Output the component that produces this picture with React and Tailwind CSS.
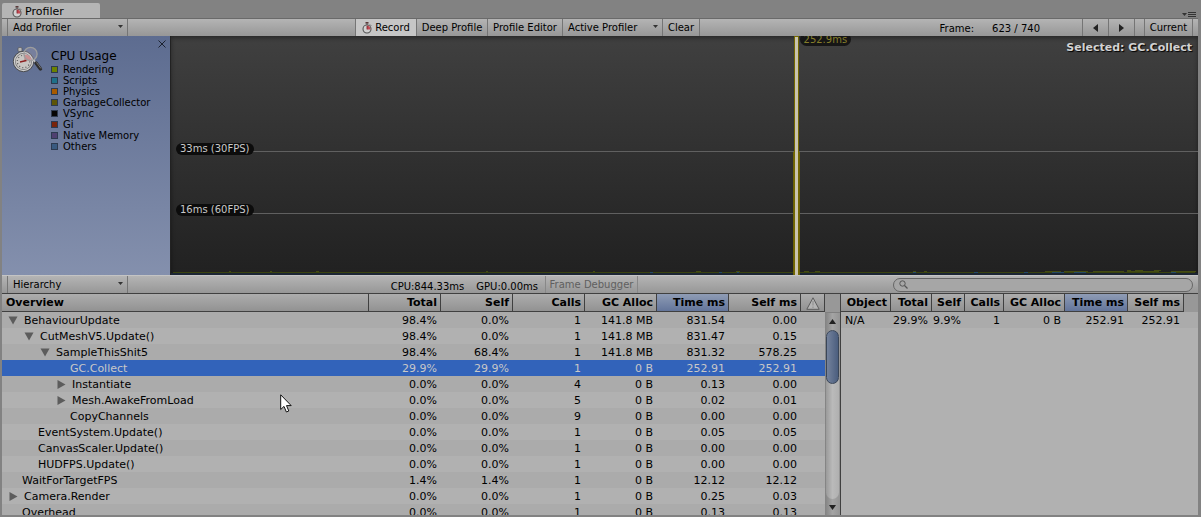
import React from "react";

const legend = [
  ["Rendering", "bg-[#6b8200]"],
  ["Scripts", "bg-[#1f7089]"],
  ["Physics", "bg-[#a85a00]"],
  ["GarbageCollector", "bg-[#5d5506]"],
  ["VSync", "bg-[#050505]"],
  ["Gi", "bg-[#78240c]"],
  ["Native Memory", "bg-[#4f4070]"],
  ["Others", "bg-[#395a80]"],
];

const rows = [
  ["BehaviourUpdate", 0, "open", "98.4%", "0.0%", "1", "141.8 MB", "831.54", "0.00"],
  ["CutMeshV5.Update()", 1, "open", "98.4%", "0.0%", "1", "141.8 MB", "831.47", "0.15"],
  ["SampleThisShit5", 2, "open", "98.4%", "68.4%", "1", "141.8 MB", "831.32", "578.25"],
  ["GC.Collect", 3, "", "29.9%", "29.9%", "1", "0 B", "252.91", "252.91"],
  ["Instantiate", 3, "closed", "0.0%", "0.0%", "4", "0 B", "0.13", "0.00"],
  ["Mesh.AwakeFromLoad", 3, "closed", "0.0%", "0.0%", "5", "0 B", "0.02", "0.01"],
  ["CopyChannels", 3, "", "0.0%", "0.0%", "9", "0 B", "0.00", "0.00"],
  ["EventSystem.Update()", 1, "", "0.0%", "0.0%", "1", "0 B", "0.05", "0.05"],
  ["CanvasScaler.Update()", 1, "", "0.0%", "0.0%", "1", "0 B", "0.00", "0.00"],
  ["HUDFPS.Update()", 1, "", "0.0%", "0.0%", "1", "0 B", "0.00", "0.00"],
  ["WaitForTargetFPS", 0, "", "1.4%", "1.4%", "1", "0 B", "12.12", "12.12"],
  ["Camera.Render", 0, "closed", "0.0%", "0.0%", "1", "0 B", "0.25", "0.03"],
  ["Overhead", 0, "", "0.0%", "0.0%", "1", "0 B", "0.13", "0.13"],
];

const indents = ["pl-[6px]", "pl-[22px]", "pl-[38px]", "pl-[54px]"];
const BAR = "flex h-[18px] shrink-0 items-stretch bg-gradient-to-b from-[#b4b4b4] to-[#979797] text-[10px] leading-[18px]";
const TH = "h-[18px] overflow-hidden whitespace-nowrap border-r border-b border-[#404040] p-0 pt-px pr-[3px] text-right font-bold";
const TH_BG = "bg-gradient-to-b from-[#adadad] to-[#929292]";
const TH_SEL = "bg-gradient-to-b from-[#8f9cb5] to-[#63759a]";
const TABLE = "w-full table-fixed border-separate border-spacing-0 text-[11px] leading-[14px]";

function Stopwatch() {
  return (
    <svg width="10" height="12" viewBox="0 0 10 12" aria-hidden="true">
      <rect x="3.5" y="0" width="3" height="1.6" fill="#5a3a3a" />
      <path d="M5 1.5V3M8 2.6L9 3.6" stroke="#444" />
      <circle cx="5" cy="7" r="4" fill="#d2d2d2" stroke="#555" strokeWidth="1.1" />
      <path d="M5 7.4V3.6A3.4 3.4 0 0 1 8.4 7.4Z" fill="#c24a54" />
      <path d="M5 7.4V4" stroke="#7a1c24" strokeWidth=".8" />
    </svg>
  );
}

function CpuIcon() {
  return (
    <svg width="32" height="30" viewBox="0 0 32 30" aria-hidden="true">
      <rect x="6" y="2.5" width="4" height="4" rx="1.2" fill="#b8b8b8" stroke="#555" strokeWidth=".7" />
      <circle cx="11.5" cy="16.5" r="10.2" fill="#777" stroke="#444" strokeWidth=".8" />
      <circle cx="11.5" cy="16.5" r="9.1" fill="none" stroke="#d0d0d0" strokeWidth="1.2" />
      <circle cx="11.5" cy="16.5" r="7.8" fill="#c9c6c3" />
      <circle cx="11.5" cy="16.5" r="6.2" fill="none" stroke="#555" strokeWidth="1.2" strokeDasharray="1 2.25" />
      <path d="M12 16L13 9.8A7 7 0 0 1 19.5 14.5Z" fill="#c98484" />
      <path d="M8 17L14.5 15.5" stroke="#8c2020" strokeWidth="1.3" />
      <circle cx="18.5" cy="9" r="6.6" fill="#d9c5cc" fillOpacity=".2" stroke="#9d9d9d" strokeWidth="1.3" />
      <path d="M21.5 15L24 18" stroke="#c4c4c4" strokeWidth="1.8" />
      <path d="M24 18L28.5 24" stroke="#2e2e2e" strokeWidth="3.4" strokeLinecap="round" />
      <path d="M24.5 17.5L29 23.5" stroke="#888" strokeWidth=".8" />
    </svg>
  );
}

function Caret() {
  return (
    <svg width="5" height="3" viewBox="0 0 5 3" className="pointer-events-none absolute right-[4px] top-[6px]" aria-hidden="true">
      <path d="M0 0H5L2.5 3Z" fill="#333" />
    </svg>
  );
}

function BarSelect({ label, width }) {
  return (
    <div className={"relative border-r border-[#757575] " + width}>
      <select aria-label={label} className="block h-[18px] w-full appearance-none bg-transparent pl-[5px] text-[10px] leading-[18px] outline-none">
        <option>{label}</option>
      </select>
      <Caret />
    </div>
  );
}

function Foldout({ state }) {
  if (!state) return null;
  return (
    <svg width="10" height="10" viewBox="0 0 10 10" className="shrink-0" aria-hidden="true">
      <path d={state === "open" ? "M0.5 0.5H9.5L5 8.5Z" : "M1.5 0V9L9.5 4.5Z"} fill="#5c5c5c" />
    </svg>
  );
}

function Chart() {
  return (
    <div className="relative min-w-0 flex-1 overflow-hidden border-l border-[#222] bg-gradient-to-b from-[#404040] to-[#212121] shadow-[inset_0_2px_4px_#00000066]">
      <svg className="absolute inset-0 h-full w-full" viewBox="0 0 1027 239" preserveAspectRatio="none" aria-hidden="true">
        <path d="M80 115.5H1027M80 177.5H1027" stroke="#606060" strokeWidth="1" />
        <rect x="0" y="237" width="1027" height="2" fill="#1b2533" />
        <path d="M2 236.5H1024" stroke="#39420f" strokeWidth="1" />
        <path d="M58 235.5h2M99 235.5h2M145 235.5h3M315 235.5h2M422 235.5h2M525 235.5h5M565 235.5h4M633 235.5h5M644 235.5h5M742 235.5h3M753 235.5h3M874 235.5h16M893 235.5h24M922 235.5h31M956 235.5h32M1000 235.5h25M956 234.5h4M964 234.5h8M983 234.5h7" stroke="#444c12" strokeWidth="1" />
        <path d="M479 236.5h3M548 236.5h3M566 236.5h2M742 236.5h3M803 236.5h4M853 236.5h4M881 236.5h12M903 236.5h12M1000 236.5h5" stroke="#244966" strokeWidth="1" />
        <rect x="622" y="116" width="7" height="123" fill="#6b6008" />
        <rect x="623" y="0" width="5" height="239" fill="#736800" />
        <rect x="624" y="1" width="3" height="238" fill="#c9c3ae" />
      </svg>
      <span className="absolute left-[5px] top-[107px] rounded-full bg-[#0c0c0c] px-[4px] text-[10px] leading-[12px] text-[#c8c8c8]">33ms (30FPS)</span>
      <span className="absolute left-[5px] top-[168px] rounded-full bg-[#0c0c0c] px-[4px] text-[10px] leading-[12px] text-[#c8c8c8]">16ms (60FPS)</span>
      <span className="absolute left-[61.2%] top-[-3px] rounded-full bg-[#161616] px-[4px] text-[10px] leading-[13px] text-[#857d2a]">252.9ms</span>
      <span className="absolute right-[6px] top-[4px] text-[11px] font-bold leading-[16px] text-[#d2d2d2] [text-shadow:1px_1px_1px_#000]">Selected: GC.Collect</span>
    </div>
  );
}

export default function App() {
  return (
    <main className="flex h-screen flex-col overflow-hidden bg-[#828282] px-[2px] pb-[2px] font-['DejaVu_Sans',sans-serif] text-black">
      <header className="flex h-[18px] shrink-0 items-end justify-between">
        <div className="flex h-[15px] w-[98px] items-center gap-[3px] rounded-t-[2px] bg-[#b5b5b5] pl-[10px] pt-[3px] text-[11px] leading-[12px]">
          <Stopwatch />
          Profiler
        </div>
        <button aria-label="Window menu" className="pb-px pr-[3px]">
          <svg width="14" height="5" viewBox="0 0 14 5" aria-hidden="true">
            <path d="M0 1H5L2.5 4Z" fill="#333" />
            <path d="M6 .5H14M6 2.5H14M6 4.5H14" stroke="#333" />
          </svg>
        </button>
      </header>

      <nav className={BAR + " border-t border-[#6a6a6a] mr-px"}>
        <div className="w-[6px] border-r border-[#757575]" />
        <BarSelect label="Add Profiler" width="w-[120px]" />
        <div className="w-[228px] border-r border-[#757575]" />
        <button className="flex w-[61px] items-center justify-center gap-[3px] border-r border-[#757575] bg-[#c6c6c6]"><Stopwatch />Record</button>
        <button className="w-[71px] border-r border-[#757575]">Deep Profile</button>
        <button className="w-[75px] border-r border-[#757575]">Profile Editor</button>
        <BarSelect label="Active Profiler" width="w-[100px]" />
        <button className="w-[37px] border-r border-[#757575]">Clear</button>
        <div className="flex flex-1 justify-end gap-[18px] border-r border-[#757575] pr-[42px] pt-px">
          <span>Frame:</span>
          <span>623 / 740</span>
        </div>
        <button aria-label="Previous frame" className="flex w-[26px] items-center justify-center border-r border-[#757575]">
          <svg width="5" height="8" viewBox="0 0 5 8" aria-hidden="true"><path d="M5 0V8L0 4Z" fill="#222" /></svg>
        </button>
        <button aria-label="Next frame" className="flex w-[26px] items-center justify-center border-r border-[#757575]">
          <svg width="5" height="8" viewBox="0 0 5 8" aria-hidden="true"><path d="M0 0V8L5 4Z" fill="#222" /></svg>
        </button>
        <div className="w-[10px] border-r border-[#757575]" />
        <button className="w-[48px] border-r border-[#757575]">Current</button>
        <div className="w-[5px]" />
      </nav>

      <section className="mr-px flex h-[239px] shrink-0">
        <aside className="flex w-[168px] shrink-0 items-start bg-gradient-to-b from-[#5d6c90] to-[#8490ad] pl-[10px]">
          <div className="pt-[9px]"><CpuIcon /></div>
          <div className="flex-1 pl-[7px] pt-[13px]">
            <h2 className="text-[12px] leading-[15px]">CPU Usage</h2>
            <ul>
              {legend.map(([name, color]) => (
                <li key={name} className="flex h-[11px] items-center gap-[5px] whitespace-nowrap text-[10px] leading-[11px]">
                  <span className={"h-[7px] w-[7px] border border-[#2d3a50] " + color} />
                  {name}
                </li>
              ))}
            </ul>
          </div>
          <button aria-label="Remove CPU Usage" className="-ml-[12px] mr-[4px] mt-[4px]">
            <svg width="8" height="8" viewBox="0 0 8 8" aria-hidden="true"><path d="M.5 .5L7.5 7.5M7.5 .5L.5 7.5" stroke="#1c2230" /></svg>
          </button>
        </aside>
        <Chart />
      </section>

      <div className={BAR + " border-t border-[#c4c4c4] mr-px"}>
        <div className="w-[6px] border-r border-[#757575]" />
        <BarSelect label="Hierarchy" width="w-[120px]" />
        <div className="flex flex-1 justify-end gap-[12px] pr-[7px] pt-[2px]">
          <span>CPU:844.33ms</span>
          <span>GPU:0.00ms</span>
        </div>
        <button disabled className="w-[93px] border-x border-[#888] text-[#5f5f5f]">Frame Debugger</button>
        <div className="flex w-[560px] items-center justify-end pr-[5px]">
          <label className="flex h-[14px] w-[300px] items-center rounded-full border border-[#666] bg-[#a6a6a6] pl-[5px]">
            <svg width="9" height="9" viewBox="0 0 9 9" fill="none" stroke="#555" aria-hidden="true"><circle cx="3.5" cy="3.5" r="2.7" /><path d="M5.5 5.5L8.5 8.5" strokeWidth="1.3" /></svg>
            <input aria-label="Search" className="h-[10px] min-w-0 flex-1 bg-transparent px-1 outline-none" />
          </label>
        </div>
      </div>

      <section className="flex min-h-0 flex-1 overflow-hidden border-t border-[#404040] bg-[#b1b1b1] mr-px">
        <div className="min-w-0 flex-1 overflow-hidden">
          <table className={TABLE}>
            <colgroup>
              <col />
              <col className="w-[72px]" /><col className="w-[72px]" /><col className="w-[72px]" />
              <col className="w-[72px]" /><col className="w-[72px]" /><col className="w-[72px]" />
              <col className="w-[24px]" />
            </colgroup>
            <thead>
              <tr>
                <th className={"h-[18px] border-r border-b border-[#404040] p-0 pl-[4px] pt-px text-left font-bold " + TH_BG}>Overview</th>
                <th className={TH + " " + TH_BG}>Total</th>
                <th className={TH + " " + TH_BG}>Self</th>
                <th className={TH + " " + TH_BG}>Calls</th>
                <th className={TH + " " + TH_BG}>GC Alloc</th>
                <th className={TH + " " + TH_SEL}>Time ms</th>
                <th className={TH + " " + TH_BG}>Self ms</th>
                <th aria-label="Warnings" className={"border-r border-b border-[#404040] p-0 pt-px " + TH_BG}>
                  <svg width="14" height="13" viewBox="0 0 14 13" className="mx-auto block" aria-hidden="true">
                    <path d="M7 .8L13.2 12.3H.8Z" fill="#b4b4b4" stroke="#5c5c5c" strokeLinejoin="round" />
                    <path d="M7 4V8.5M7 9.5V11" stroke="#8a8a8a" />
                  </svg>
                </th>
              </tr>
            </thead>
            <tbody>
              {rows.map(([name, depth, state, ...vals], i) => (
                <tr key={name} className={i === 3 ? "bg-[#3263ba] text-[#c8c8c8]" : i % 2 ? "bg-[#b1b1b1]" : "bg-[#ababab]"}>
                  <td className={"h-[16px] p-0 pt-[2px] " + indents[depth]}>
                    <div className="flex items-center gap-[6px]">
                      <Foldout state={state} />
                      <span className={state ? "" : "pl-[14px]"}>{name}</span>
                    </div>
                  </td>
                  {vals.map((v, j) => (
                    <td key={j} className="p-0 pr-[4px] pt-[2px] text-right">{v}</td>
                  ))}
                  <td className="p-0" />
                </tr>
              ))}
            </tbody>
          </table>
        </div>
        <div className="flex w-[15px] shrink-0 flex-col bg-[#989898] pt-[18px]">
          <div className="flex min-h-0 flex-1 flex-col items-center border-t border-[#808080] bg-gradient-to-r from-[#828282] via-[#a4a4a4] to-[#949494]">
            <button aria-label="Scroll up" className="flex h-[17px] w-full shrink-0 items-center justify-center">
              <svg width="7" height="5" viewBox="0 0 7 5" aria-hidden="true"><path d="M0 5H7L3.5 0Z" fill="#222" /></svg>
            </button>
            <div className="min-h-0 w-[13px] flex-1 rounded-full bg-gradient-to-r from-[#9a9a9a] via-[#bababa] to-[#b0b0b0]">
              <div className="h-[54px] rounded-full border border-[#3a4658] bg-gradient-to-r from-[#74829c] to-[#4b5e7e]" />
            </div>
            <button aria-label="Scroll down" className="flex h-[16px] w-full shrink-0 items-center justify-center">
              <svg width="7" height="5" viewBox="0 0 7 5" aria-hidden="true"><path d="M0 0H7L3.5 5Z" fill="#222" /></svg>
            </button>
          </div>
        </div>
        <div className="w-[358px] shrink-0 overflow-hidden border-l border-[#404040]">
          <table className={TABLE}>
            <colgroup>
              <col className="w-[50px]" /><col className="w-[41px]" /><col className="w-[33px]" /><col className="w-[39px]" />
              <col className="w-[61px]" /><col className="w-[63px]" /><col className="w-[56px]" /><col />
            </colgroup>
            <thead>
              <tr>
                {["Object", "Total", "Self", "Calls", "GC Alloc", "Time ms", "Self ms"].map((h) => (
                  <th key={h} className={TH + " " + (h === "Time ms" ? TH_SEL : TH_BG)}>{h}</th>
                ))}
                <td className="bg-[#989898] p-0" />
              </tr>
            </thead>
            <tbody>
              <tr className="whitespace-nowrap bg-[#ababab]">
                <td className="h-[16px] p-0 pl-[4px] pt-[2px]">N/A</td>
                {["29.9%", "9.9%", "1", "0 B", "252.91", "252.91"].map((v, i) => (
                  <td key={i} className="p-0 pr-[4px] pt-[2px] text-right">{v}</td>
                ))}
                <td className="p-0" />
              </tr>
            </tbody>
          </table>
        </div>
      </section>

      <svg className="pointer-events-none absolute left-[280px] top-[394px]" width="12" height="20" viewBox="0 0 12 20" aria-hidden="true">
        <path d="M.7 .8V15.5L4 12.4L6.4 18L8.8 17L6.5 11.6H11.2Z" fill="#fff" stroke="#111" />
      </svg>
    </main>
  );
}
